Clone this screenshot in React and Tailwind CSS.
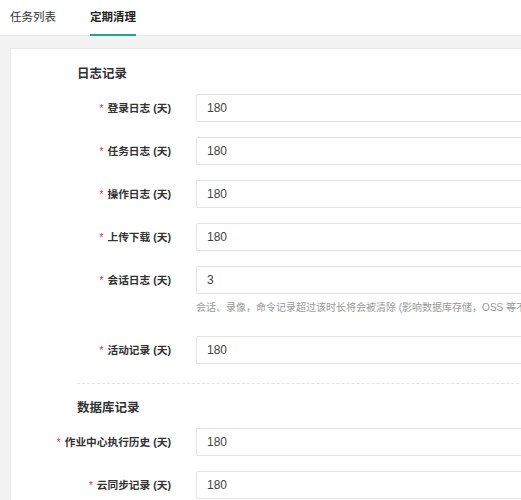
import React from 'react';

const logRows = [
  { label: '登录日志 (天)', value: '180' },
  { label: '任务日志 (天)', value: '180' },
  { label: '操作日志 (天)', value: '180' },
  { label: '上传下载 (天)', value: '180' },
  { label: '会话日志 (天)', value: '3', help: '会话、录像，命令记录超过该时长将会被清除 (影响数据库存储，OSS 等不受影响)' },
  { label: '活动记录 (天)', value: '180' },
];

const dbRows = [
  { label: '作业中心执行历史 (天)', value: '180' },
  { label: '云同步记录 (天)', value: '180' },
];

const Row = ({ row }) => (
  <div>
    <div className="flex items-center h-[28px]">
      <div className="w-[161px] text-right pr-[1px] text-[10.7px] font-semibold text-[#333] whitespace-nowrap">
        <span className="text-[#f5222d] mr-[4px] text-[10px] font-normal">*</span>
        {row.label}
      </div>
      <div className="ml-[24px] w-[500px] h-[28px] border border-[#e3e3e3] rounded-[2px] bg-white flex items-center px-[10px] text-[12px] text-[#444]">
        {row.value}
      </div>
    </div>
    {row.help && (
      <div className="ml-[185px] mt-[7px] mb-[6px] leading-[14px] text-[10px] text-[#999] whitespace-nowrap">
        {row.help}
      </div>
    )}
  </div>
);

const Section = ({ title, rows }) => (
  <div>
    <div className="pl-[66px] h-[18px] leading-[18px] text-[12.5px] font-semibold text-[#333]">{title}</div>
    <div className="mt-[11px] flex flex-col gap-[15px]">
      {rows.map((r, i) => (
        <Row key={i} row={r} />
      ))}
    </div>
  </div>
);

export default function App() {
  return (
    <div
      className="w-[521px] h-[500px] overflow-hidden bg-[#f2f2f2]"
      style={{ fontFamily: '"Liberation Sans", "Noto Sans CJK SC", sans-serif' }}
    >
      <div className="h-[36px] bg-white border-b border-[#e6e6e6] flex items-stretch pl-[10px] gap-[34px] text-[11.5px]">
        <div className="flex items-center text-[#333]">任务列表</div>
        <div className="relative flex items-center text-[#222] font-semibold">
          定期清理
          <div className="absolute left-0 right-0 bottom-[-1px] h-[2px] bg-[#1fa98a]" />
        </div>
      </div>
      <div className="pl-[10px] pt-[12px]">
        <div className="w-[700px] h-[500px] bg-white border border-[#e8e8e8] pt-[16px]">
          <Section title="日志记录" rows={logRows} />
          <div className="ml-[66px] mt-[19px] mb-[15px] border-t border-dashed border-[#e3e3e3]" />
          <Section title="数据库记录" rows={dbRows} />
        </div>
      </div>
    </div>
  );
}
